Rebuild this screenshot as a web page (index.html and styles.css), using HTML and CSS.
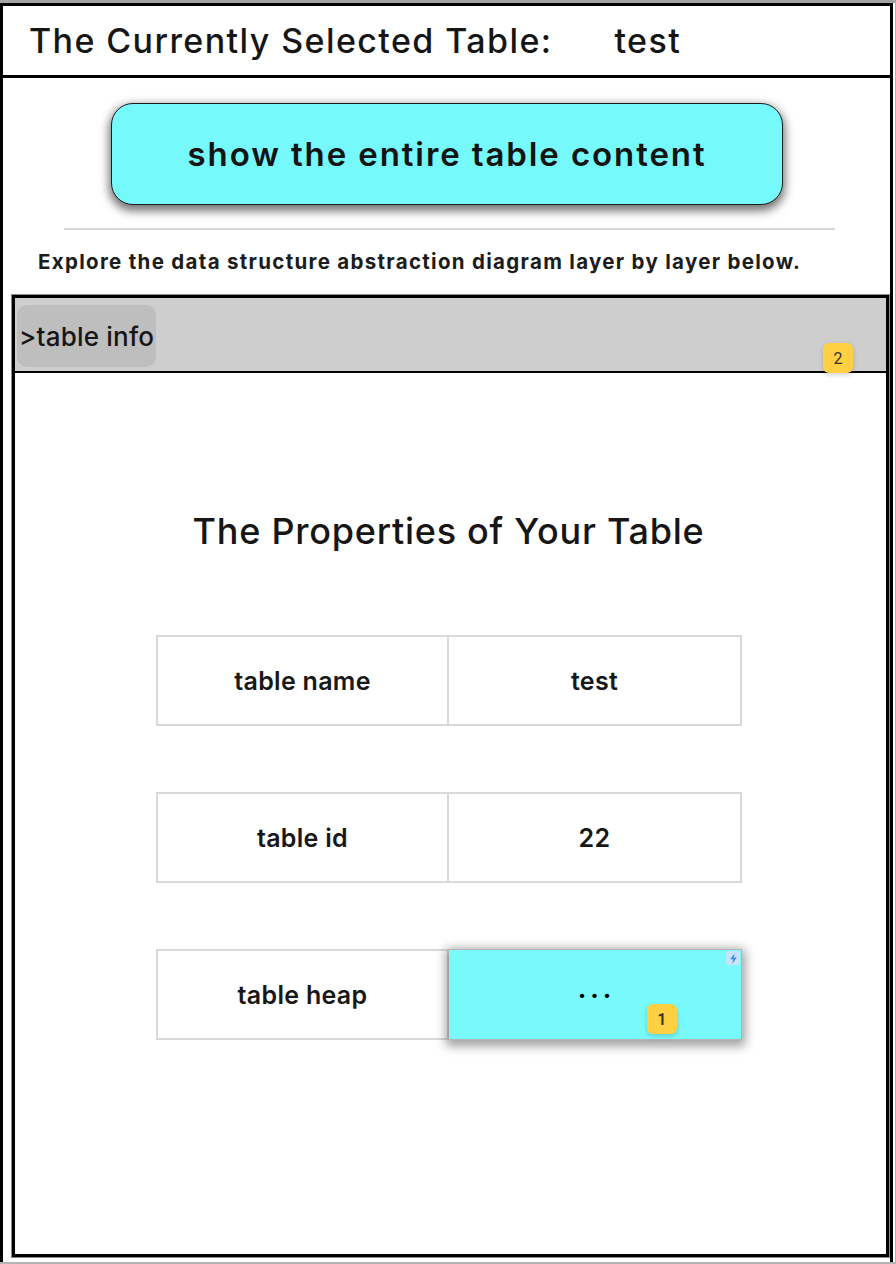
FILE: index.html
```html
<!DOCTYPE html>
<html lang="en">
<head>
<meta charset="utf-8">
<title>Table info</title>
<link rel="stylesheet" href="styles.css">
</head>
<body>
<div class="page">
  <div class="frame">
    <header class="title-bar">
      <span class="title-label">The Currently Selected Table:</span>
      <span class="title-value">test</span>
    </header>
    <main class="main">
      <button class="show-btn" type="button">show the entire table content</button>
      <div class="divider"></div>
      <p class="explore">Explore the data structure abstraction diagram layer by layer below.</p>
      <section class="panel">
        <div class="panel-head">
          <div class="pill">&gt;table info</div>
          <span class="badge badge-2">2</span>
        </div>
        <div class="panel-body">
          <h2 class="props-title">The Properties of Your Table</h2>
          <div class="prop-row">
            <div class="cell">table name</div>
            <div class="cell">test</div>
          </div>
          <div class="prop-row">
            <div class="cell">table id</div>
            <div class="cell">22</div>
          </div>
          <div class="prop-row">
            <div class="cell">table heap</div>
            <div class="cell cell-active">
              <span class="dots">• • •</span>
              <span class="bolt">
                <svg width="9" height="11" viewBox="0 0 9 11"><path d="M5.6 0.3 L1.2 6.2 H4.2 L3.2 10.7 L7.8 4.6 H4.8 Z" fill="#2f8dfc"/></svg>
              </span>
              <span class="badge badge-1">1</span>
            </div>
          </div>
        </div>
      </section>
    </main>
  </div>
</div>
</body>
</html>
```

FILE: styles.css
```css
html, body {
  margin: 0;
  padding: 0;
  background: #fff;
}

body {
  font-family: Inter, "Noto Sans", "Liberation Sans", sans-serif;
  color: #161616;
}

.page {
  width: 896px;
  height: 1264px;
  box-sizing: border-box;
  border-top: 3px solid #a4a4a4;
  border-right: 1px solid #b4b4b4;
  border-bottom: 2px solid #b4b4b4;
}

.frame {
  height: 100%;
  box-sizing: border-box;
  border-left: 3px solid #000;
  border-right: 3px solid #000;
  margin-right: 2px;
  display: flex;
  flex-direction: column;
}

.title-bar {
  height: 69px;
  border-top: 3px solid #000;
  border-bottom: 3px solid #000;
  display: flex;
  align-items: center;
  padding-left: 26px;
  font-size: 34px;
  font-weight: 500;
  letter-spacing: 1.4px;
}

.title-value {
  margin-left: 62px;
}

.main {
  flex: 1;
  display: flex;
  flex-direction: column;
  padding-top: 25px;
}

.show-btn {
  align-self: center;
  width: 672px;
  height: 102px;
  margin-left: 1px;
  border: 1px solid #1c1c1c;
  border-radius: 22px;
  background: #76f9fb;
  box-shadow: 0 4px 10px 2px rgba(0, 0, 0, 0.55);
  font-family: inherit;
  font-size: 33px;
  font-weight: 600;
  color: #141414;
  letter-spacing: 1.9px;
  padding: 0;
}

.divider {
  margin: 23px 0 0 61px;
  width: 771px;
  height: 0;
  border-top: 2px solid #dadada;
}

.explore {
  margin: 18px 0 0 35px;
  font-size: 20.5px;
  line-height: 28px;
  font-weight: 700;
  color: #1c1c1c;
  letter-spacing: 1.3px;
}

.panel {
  margin: 19px 1px 5px 9px;
  flex: 1;
  border: 3px solid #000;
  box-shadow: 0 0 0 1px #8a8a8a;
  display: flex;
  flex-direction: column;
}

.panel-head {
  position: relative;
  height: 75px;
  background: #cecece;
  border-bottom: 2px solid #000;
  box-sizing: border-box;
  padding: 7px 0 0 2px;
}

.pill {
  width: 139px;
  height: 62px;
  box-sizing: border-box;
  background: #bebebe;
  border-radius: 10px;
  display: flex;
  align-items: center;
  padding-left: 2px;
  font-size: 26px;
  font-weight: 500;
  letter-spacing: 0.2px;
  color: #161616;
}

.badge {
  position: absolute;
  width: 30px;
  height: 30px;
  border-radius: 6px;
  background: #fed042;
  color: #333;
  font-family: Roboto, "Liberation Sans", sans-serif;
  font-size: 16px;
  display: flex;
  align-items: center;
  justify-content: center;
  box-shadow: 0 2px 5px rgba(0, 0, 0, 0.18);
}

.badge-2 {
  left: 808px;
  top: 45px;
}

.panel-body {
  flex: 1;
  display: flex;
  flex-direction: column;
  align-items: center;
}

.props-title {
  margin: 136px 0 0 -4px;
  font-size: 36px;
  line-height: 44px;
  font-weight: 500;
  letter-spacing: 0.75px;
  color: #161616;
}

.prop-row {
  display: grid;
  grid-template-columns: 293px 293px;
  margin: 0 3px 66px 0;
}

.props-title + .prop-row {
  margin-top: 82px;
}

.cell {
  position: relative;
  height: 91px;
  box-sizing: border-box;
  border: 2px solid #d9d9d9;
  display: flex;
  align-items: center;
  justify-content: center;
  font-size: 25px;
  font-weight: 600;
  letter-spacing: 0.3px;
  color: #181818;
}

.cell + .cell {
  border-left: none;
}

.cell-active {
  background: #78fafc;
  border: 1px solid #b4b4b4;
  box-shadow: 0 3px 10px 3px rgba(0, 0, 0, 0.38);
}

.dots {
  font-size: 14px;
  letter-spacing: 1px;
  color: #000;
}

.bolt {
  position: absolute;
  top: 1px;
  right: 1px;
  width: 14px;
  height: 14px;
  border-radius: 2px;
  background: #c8e2f8;
  display: flex;
  align-items: center;
  justify-content: center;
}

.badge-1 {
  left: 198px;
  top: 54px;
}
```
